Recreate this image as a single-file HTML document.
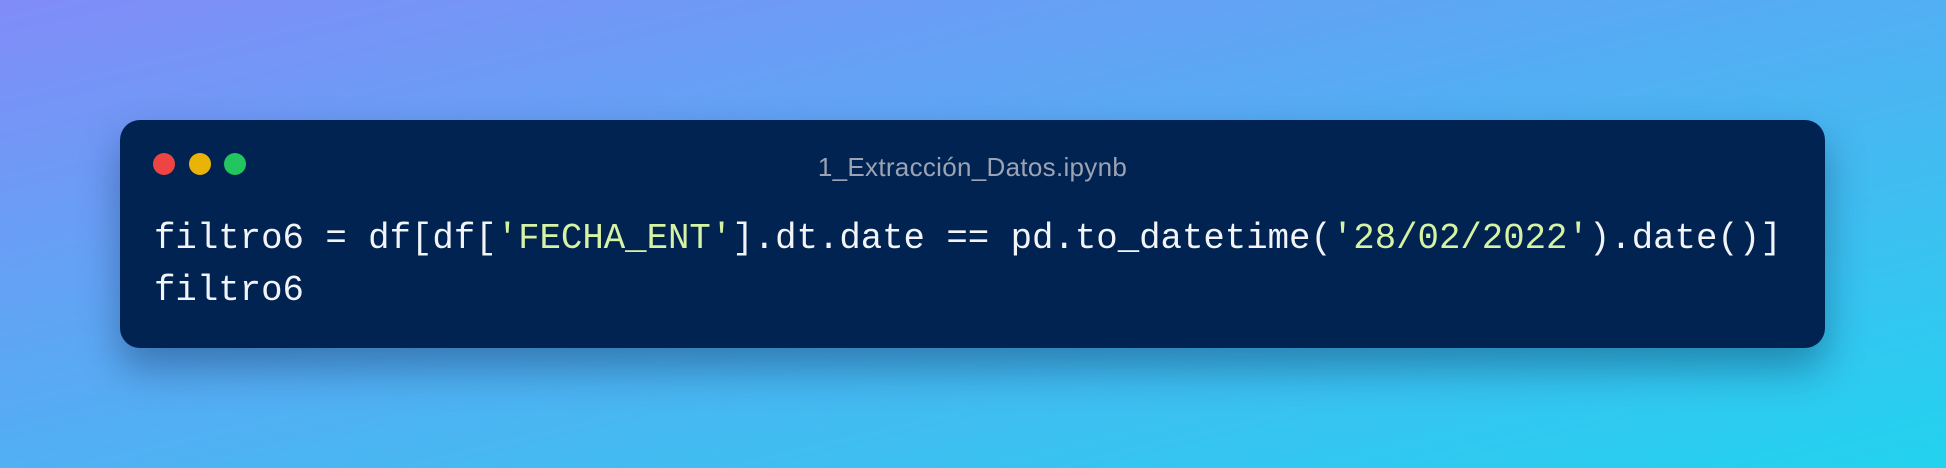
<!DOCTYPE html>
<html><head><meta charset="utf-8"><style>
html,body{margin:0;padding:0;}
body{width:1946px;height:468px;overflow:hidden;position:relative;
background:linear-gradient(to bottom right,#818cf8,#22d3ee);}
.card{position:absolute;left:120px;top:120px;width:1705px;height:228px;background:#012351;border-radius:20px;
box-shadow:0 20px 40px rgba(0,20,60,0.35);}
.dot{position:absolute;top:153px;width:22px;height:22px;border-radius:50%;}
.title{position:absolute;left:120px;width:1705px;top:152px;text-align:center;color:#9ba3b4;
font-family:"Liberation Sans",sans-serif;font-size:26px;letter-spacing:0.3px;}
.code{position:absolute;left:154px;top:213px;font-family:"Liberation Mono",monospace;font-size:35.7px;line-height:52px;color:#f2f4f8;white-space:pre;}
.s{color:#d6f2a4;}
</style></head><body>
<div class="card"></div>
<div class="dot" style="left:153px;background:#ef4444"></div>
<div class="dot" style="left:189px;background:#eab308"></div>
<div class="dot" style="left:224px;background:#22c55e"></div>
<div class="title">1_Extracción_Datos.ipynb</div>
<div class="code">filtro6 = df[df[<span class="s">'FECHA_ENT'</span>].dt.date == pd.to_datetime(<span class="s">'28/02/2022'</span>).date()]
filtro6</div>
</body></html>
